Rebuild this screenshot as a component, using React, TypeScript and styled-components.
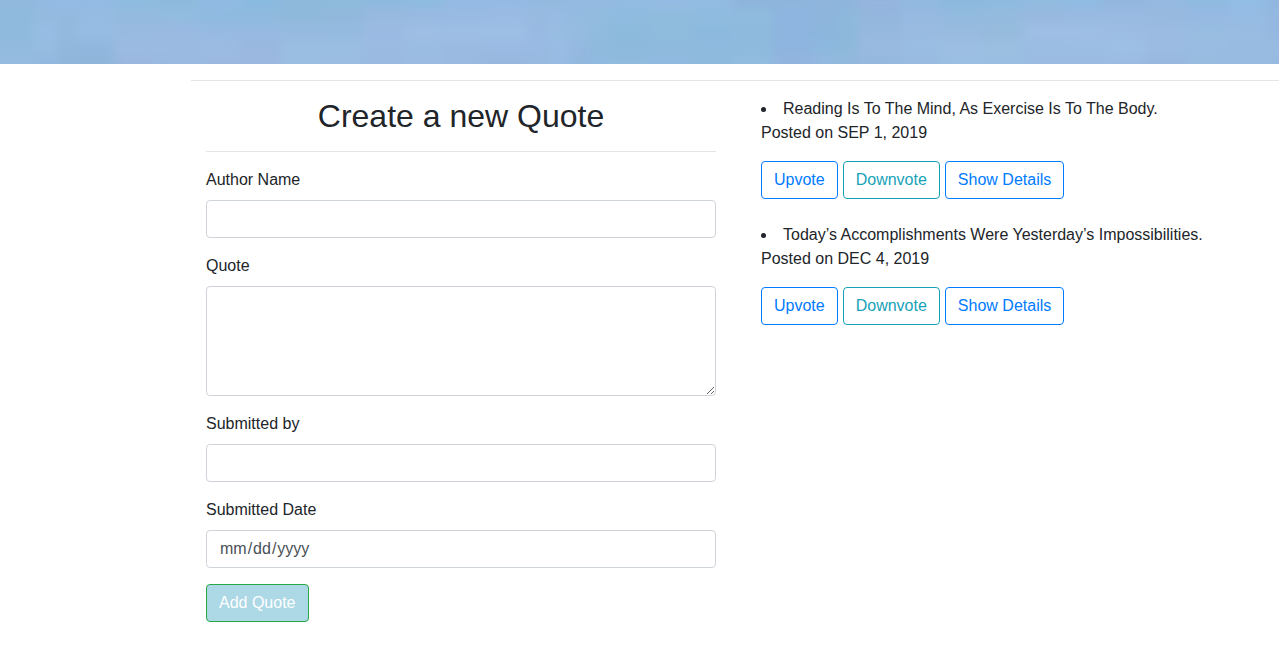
import React from 'react';
import styled, { createGlobalStyle } from 'styled-components';

const GlobalStyle = createGlobalStyle`
  *, *::before, *::after { box-sizing: border-box; }
  body {
    margin: 0;
    background: #fff;
    color: #212529;
    font: 400 16px/24px "Liberation Sans", Arial, sans-serif;
    overflow-x: hidden;
  }
`;

const Banner = styled.header`
  height: 64px;
  background: #96bbe0;
`;

const Sky = styled.svg`
  display: block;
  width: 100%;
  height: 100%;
`;

const Content = styled.main`
  margin-left: 191px;
  padding-bottom: 24px;
`;

const Divider = styled.hr`
  margin: 16px 0;
  border: 0;
  border-top: 1px solid rgba(0, 0, 0, 0.1);
`;

const Columns = styled.div`
  display: grid;
  grid-template-columns: minmax(0, 540px) minmax(0, 1fr);
  gap: 15px;
`;

const Column = styled.section`
  padding: 0 15px;
`;

const Title = styled.h2`
  margin: 0;
  font-size: 32px;
  font-weight: 500;
  line-height: 38px;
  text-align: center;
`;

const Field = styled.div`
  display: flex;
  flex-direction: column;
  gap: 8px;
  margin-bottom: 16px;
`;

const Control = styled.input`
  display: block;
  width: 100%;
  height: 38px;
  margin: 0;
  padding: 6px 12px;
  border: 1px solid #ced4da;
  border-radius: 4px;
  background: #fff;
  color: #495057;
  font: inherit;

  &::-webkit-calendar-picker-indicator {
    display: none;
  }
`;

const TextArea = styled(Control).attrs({ as: 'textarea' })`
  height: 110px;
  resize: vertical;
`;

const Button = styled.button<{ $color: string; $border?: string; $fill?: string }>`
  display: inline-block;
  margin: 0;
  padding: 6px 12px;
  border: 1px solid ${(p) => p.$border ?? p.$color};
  border-radius: 4px;
  background: ${(p) => p.$fill ?? 'transparent'};
  color: ${(p) => p.$color};
  font: inherit;
  vertical-align: middle;
  cursor: pointer;

  &:disabled {
    opacity: 1;
    cursor: default;
  }
`;

const QuoteList = styled.ul`
  margin: 0;
  padding: 0;
  list-style: disc inside;
`;

const QuoteItem = styled.li`
  margin-bottom: 24px;
`;

const Actions = styled.div`
  display: flex;
  flex-wrap: wrap;
  gap: 5px;
  margin-top: 16px;
`;

// Each strip of sky: left edge, then its colours from top to bottom.
const strips: [number, string[]][] = [
  [0, ['#91b8dd', '#8fbadd', '#8fbadd', '#92bade', '#96bbe1']],
  [34, ['#92bae2', '#95bae0', '#98bde4', '#96bce2', '#93b8df']],
  [57, ['#93bbe4', '#94b9df', '#94b9df', '#92b7dd', '#8fb6dc']],
  [77, ['#92bae3', '#96bbe2', '#96bce3', '#91b7de', '#8fb5db']],
  [115, ['#8ebbe0', '#94bade', '#98b9e0', '#9cbbe2', '#99b7df']],
  [157, ['#8dbbdc', '#92bbe0', '#99b9e1', '#9bbbe2', '#9ab9e1']],
  [198, ['#91bae4', '#8fbadf', '#96bae1', '#9cbbe3', '#9bb9e0']],
  [240, ['#89bae1', '#8fbade', '#96b9e2', '#99b7df', '#9bb8e0']],
  [280, ['#8eb9da', '#8fb9db', '#96badf', '#9abee1', '#9abde2']],
  [320, ['#8dbadb', '#91b9dc', '#95badf', '#9abee1', '#9abde1']],
  [363, ['#8eb9df', '#97b9df', '#9bbae3', '#9cbbe3', '#99b9e1']],
  [404, ['#8dbbe0', '#98b9e1', '#9ebee4', '#9bbce2', '#9bbbe3']],
  [443, ['#94bae3', '#98bae3', '#9dbee4', '#9bbae2', '#99b9e1']],
  [484, ['#94bae4', '#9abbe3', '#9dbee5', '#9abae3', '#97b7df']],
  [527, ['#93b9df', '#97bae1', '#98bae2', '#99bae2', '#97b9e0']],
  [548, ['#93b9df', '#97bbe2', '#98bde3', '#98bce3', '#97bbe2']],
  [569, ['#95b9e1', '#93bae0', '#96bbe1', '#94b8df', '#93b8de']],
  [588, ['#95b9e2', '#92bcdf', '#91badf', '#90b9de', '#90badf']],
  [609, ['#93bbe3', '#8ebbdf', '#8cbadd', '#8dbadc', '#90badf']],
  [649, ['#94bbe3', '#8fbbdd', '#8fbbdd', '#8ebadd', '#91bae0']],
  [692, ['#93bbe3', '#8fbbdf', '#8bb9dd', '#8ebade', '#8ebadd']],
  [733, ['#8eb4db', '#8fbbde', '#8ebadd', '#8ebade', '#91bce0']],
  [773, ['#8eb6dc', '#8eb5e0', '#8cb4de', '#8eb5df', '#93b4df']],
  [814, ['#8eb4dc', '#8eb5dc', '#8cb6dc', '#8db8df', '#94b9df']],
  [837, ['#8eb5dc', '#8db8dc', '#8db8db', '#8eb9db', '#92b8dd']],
  [857, ['#96b4df', '#93b7dd', '#96b8de', '#98b9e0', '#94b8df']],
  [901, ['#91b9df', '#96b9e1', '#99bbe1', '#9abde3', '#99bbe2']],
  [941, ['#8cb8df', '#93badf', '#98bade', '#9bbee2', '#9abfe2']],
  [982, ['#8ebae0', '#93bbdd', '#95badc', '#9abfe1', '#9abee2']],
  [1022, ['#91bbe0', '#98b8e0', '#9ebee4', '#9bbce3', '#9bbbe2']],
  [1063, ['#8fbbe2', '#98bae1', '#9ebee5', '#9bbce3', '#9bbbe2']],
  [1103, ['#92b6de', '#99bae2', '#9cbce3', '#9dbee5', '#9bbbe3']],
  [1145, ['#94b9e0', '#97b8df', '#9bbbe2', '#9bbbe2', '#98b8df']],
  [1186, ['#8fbae0', '#95b9e2', '#98bde1', '#99bde2', '#98bbe0']],
  [1229, ['#91bde5', '#96bbe3', '#98bce2', '#98bce1', '#96bae0']],
  [1265, ['#90b7df', '#94b8df', '#94b8df', '#97bbe1', '#96bae0']],
];

const PRIMARY = '#007bff';
const INFO = '#17a2b8';
const SUCCESS = '#28a745';

const quotes = [
  { text: 'Reading Is To The Mind, As Exercise Is To The Body.', posted: 'SEP 1, 2019' },
  { text: 'Today’s Accomplishments Were Yesterday’s Impossibilities.', posted: 'DEC 4, 2019' },
];

export default function App() {
  return (
    <>
      <GlobalStyle />
      <Banner>
        <Sky viewBox="0 0 1279 64" preserveAspectRatio="none" aria-hidden="true">
          <defs>
            <filter id="haze" x="-5%" y="0" width="110%" height="100%" colorInterpolationFilters="sRGB">
              <feGaussianBlur stdDeviation="5 0" />
            </filter>
            {strips.map(([x, colors]) => (
              <linearGradient key={x} id={`sky-${x}`} x1="0" y1="0" x2="0" y2="1">
                {colors.map((color, i) => (
                  <stop key={i} offset={i / (colors.length - 1)} stopColor={color} />
                ))}
              </linearGradient>
            ))}
          </defs>
          <g filter="url(#haze)">
            {strips.map(([x]) => {
              const left = x === 0 ? -40 : x;
              return <rect key={x} x={left} y="0" width={1320 - left} height="64" fill={`url(#sky-${x})`} />;
            })}
          </g>
        </Sky>
      </Banner>
      <Content>
        <Divider />
        <Columns>
          <Column>
            <Title>Create a new Quote</Title>
            <Divider />
            <form onSubmit={(e) => e.preventDefault()}>
              <Field>
                <label htmlFor="author">Author Name</label>
                <Control id="author" type="text" />
              </Field>
              <Field>
                <label htmlFor="quote">Quote</label>
                <TextArea id="quote" />
              </Field>
              <Field>
                <label htmlFor="submitter">Submitted by</label>
                <Control id="submitter" type="text" />
              </Field>
              <Field>
                <label htmlFor="date">Submitted Date</label>
                <Control id="date" type="date" />
              </Field>
              <Button type="submit" disabled $color="#fff" $border={SUCCESS} $fill="lightblue">
                Add Quote
              </Button>
            </form>
          </Column>
          <Column>
            <QuoteList>
              {quotes.map((quote) => (
                <QuoteItem key={quote.posted}>
                  {quote.text}
                  <div>Posted on {quote.posted}</div>
                  <Actions>
                    <Button type="button" $color={PRIMARY}>Upvote</Button>
                    <Button type="button" $color={INFO}>Downvote</Button>
                    <Button type="button" $color={PRIMARY}>Show Details</Button>
                  </Actions>
                </QuoteItem>
              ))}
            </QuoteList>
          </Column>
        </Columns>
      </Content>
    </>
  );
}
